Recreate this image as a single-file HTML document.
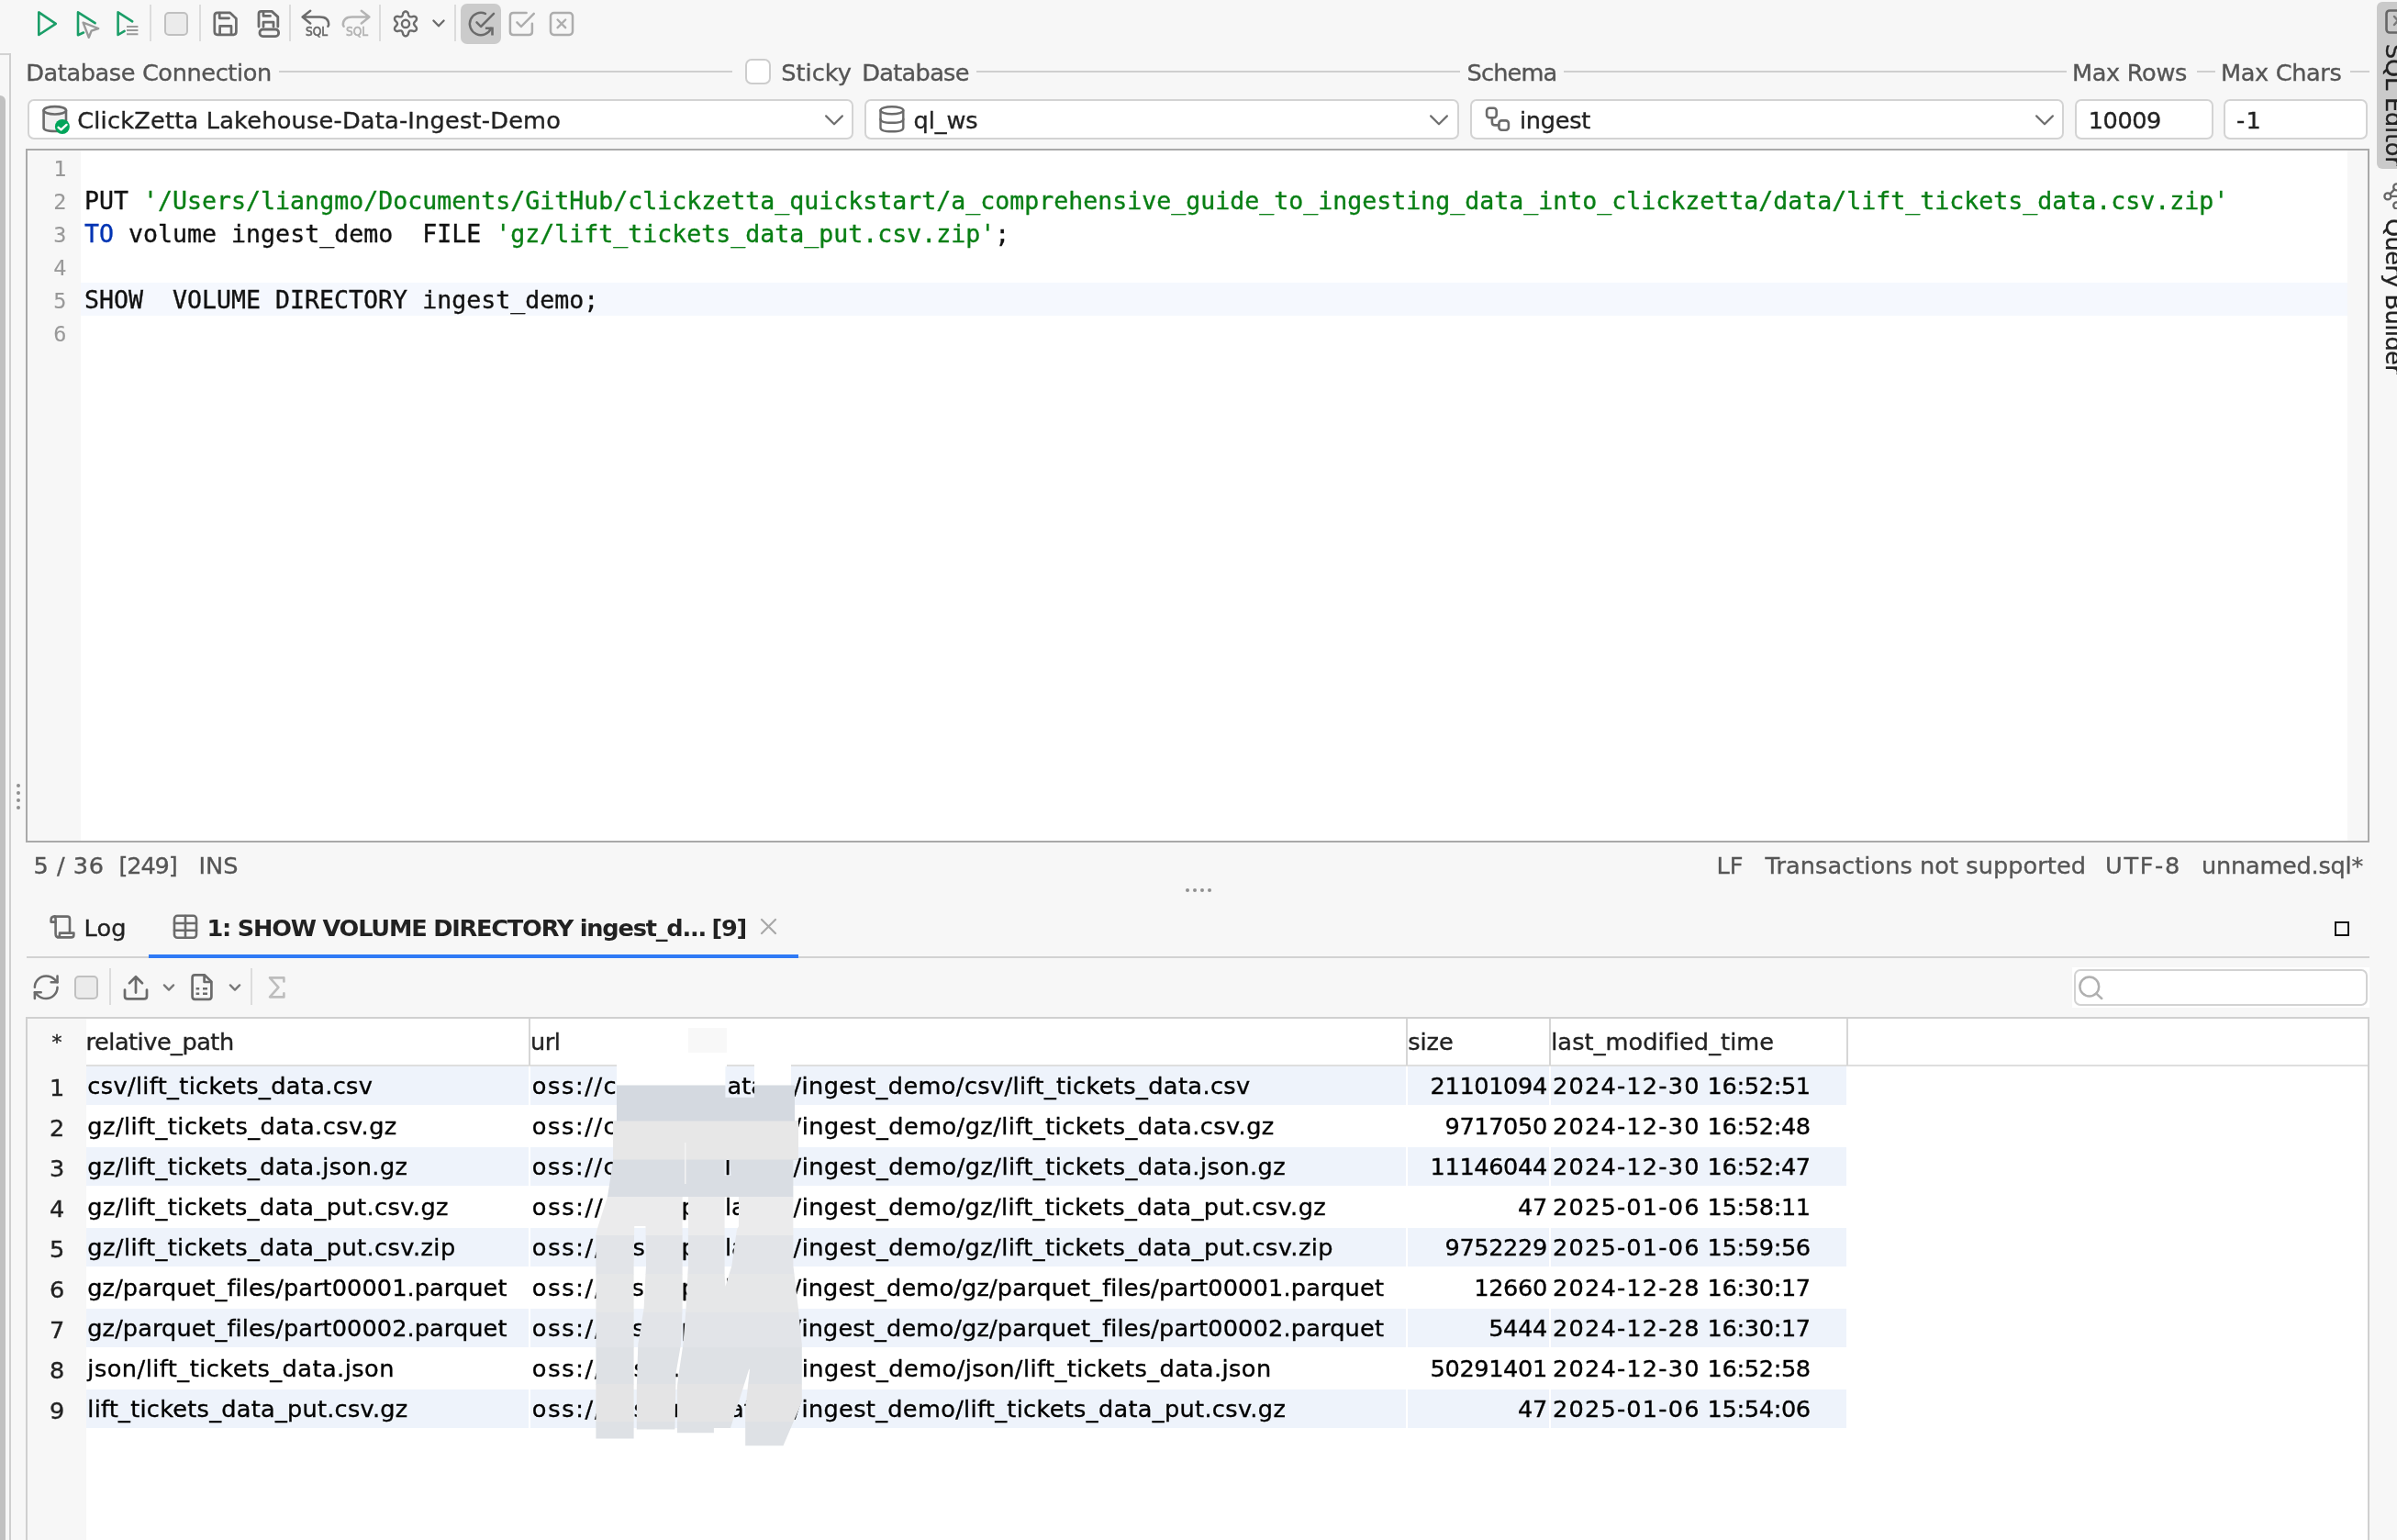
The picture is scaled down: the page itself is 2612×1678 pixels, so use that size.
<!DOCTYPE html>
<html lang="en"><head><meta charset="utf-8"><title>SQL Commander</title>
<style>
html,body{margin:0;padding:0;}
body{width:2612px;height:1678px;overflow:hidden;background:#f7f7f7;font-family:"DejaVu Sans","Liberation Sans",sans-serif;}
#root{will-change:transform;position:relative;width:2612px;height:1678px;overflow:hidden;background:#f7f7f7;}
.b{position:absolute;box-sizing:border-box;}
.t{position:absolute;white-space:pre;line-height:40px;height:40px;-webkit-text-stroke:0.35px;}
.m{font-family:"DejaVu Sans Mono","Liberation Mono",monospace;-webkit-text-stroke:0.35px;}
.sq{font-family:"DejaVu Sans Condensed","DejaVu Sans","Liberation Sans",sans-serif;font-weight:400;font-size:14.5px;letter-spacing:0px;-webkit-text-stroke:0.7px;transform:scaleX(0.93);transform-origin:0 50%;}

</style></head>
<body>
<div id="root">
<div class="b" style="left:0px;top:58px;width:12px;height:2px;background:#d2d2d2;"></div>
<div class="b" style="left:10px;top:58px;width:2px;height:1620px;background:#cfcfcf;"></div>
<div class="b" style="left:0px;top:104px;width:6px;height:1580px;background:#c1c1c1;border-top-right-radius:6px;"></div>
<div class="b" style="left:18px;top:854px;width:4px;height:4px;background:#8f8f8f;border-radius:50%;"></div>
<div class="b" style="left:18px;top:862px;width:4px;height:4px;background:#8f8f8f;border-radius:50%;"></div>
<div class="b" style="left:18px;top:870px;width:4px;height:4px;background:#8f8f8f;border-radius:50%;"></div>
<div class="b" style="left:18px;top:878px;width:4px;height:4px;background:#8f8f8f;border-radius:50%;"></div>
<div class="b" style="left:2590px;top:2px;width:40px;height:182px;background:#cacaca;border-radius:6px;"></div>
<svg class="b" style="left:2598.7px;top:10px" width="30" height="28" viewBox="0 0 30 28" fill="none" stroke-linecap="round" stroke-linejoin="round"><rect x="1.5" y="1.5" width="27" height="24" rx="3.5" stroke="#666" stroke-width="2.6"/><path d="M10 8 L18 17 M18 8 L10 17" stroke="#777" stroke-width="2.4"/></svg>
<div class="t" style="left:2599.5px;top:48px;font-size:25.6px;color:#222;transform-origin:0 0;transform:rotate(90deg) translate(0,-29px);letter-spacing:-0.2px;">SQL Editor</div>
<svg class="b" style="left:2594px;top:196px" width="30" height="32" viewBox="0 0 30 32" fill="none" stroke-linecap="round" stroke-linejoin="round"><circle cx="7.9" cy="17.9" r="3.5" stroke="#666" stroke-width="2.3"/><circle cx="17.7" cy="7.9" r="3.5" stroke="#666" stroke-width="2.3"/><circle cx="17.7" cy="27.9" r="3.5" stroke="#666" stroke-width="2.3"/><path d="M10.4 15.4 L15.2 10.4 M11.4 17.9 H22" stroke="#666" stroke-width="2.3"/></svg>
<div class="t" style="left:2599.5px;top:238px;font-size:25.6px;color:#222;transform-origin:0 0;transform:rotate(90deg) translate(0,-29px);letter-spacing:-0.55px;">Query Builder</div>
<svg class="b" style="left:37px;top:8px" width="32" height="36" viewBox="0 0 32 36" fill="none" stroke-linecap="round" stroke-linejoin="round"><path d="M5.3 5.4 L5.3 30 L23.8 17.8 Z" stroke="#1b9e68" stroke-width="2.6"/></svg>
<svg class="b" style="left:79px;top:8px" width="34" height="38" viewBox="0 0 34 38" fill="none" stroke-linecap="round" stroke-linejoin="round"><path d="M12 27.5 L6 30.2 L6 5.4 L24.6 17.2" stroke="#1b9e68" stroke-width="2.6"/><path d="M11.6 16.6 L28.2 23 L20.6 25.6 L17.8 32.8 Z" stroke="#9a9a9a" stroke-width="2.4"/></svg>
<svg class="b" style="left:123px;top:8px" width="34" height="36" viewBox="0 0 34 36" fill="none" stroke-linecap="round" stroke-linejoin="round"><path d="M12.6 25.8 L5.6 30 L5.6 5.4 L21.2 15.4" stroke="#1b9e68" stroke-width="2.6"/><path d="M15 21 H27.4 M15 25.1 H27.4 M15 29.2 H27.4" stroke="#9a9a9a" stroke-width="2" stroke-linecap="butt"/></svg>
<div class="b" style="left:163px;top:5px;width:2px;height:40px;background:#dcdcdc;"></div>
<div class="b" style="left:217px;top:5px;width:2px;height:40px;background:#dcdcdc;"></div>
<div class="b" style="left:315px;top:5px;width:2px;height:40px;background:#dcdcdc;"></div>
<div class="b" style="left:413px;top:5px;width:2px;height:40px;background:#dcdcdc;"></div>
<div class="b" style="left:495px;top:5px;width:2px;height:40px;background:#dcdcdc;"></div>
<div class="b" style="left:179px;top:13px;width:26px;height:26px;background:#ebebeb;border:2px solid #c0c0c0;border-radius:5px;"></div>
<svg class="b" style="left:230px;top:10px" width="32" height="32" viewBox="0 0 32 32" fill="none" stroke-linecap="round" stroke-linejoin="round"><path d="M7 3.8 H20.5 L27.4 10.2 V24.6 Q27.4 27.8 24.2 27.8 H7 Q3.8 27.8 3.8 24.6 V7 Q3.8 3.8 7 3.8 Z" stroke="#6b6b6b" stroke-width="2.7"/><path d="M9.2 4 V9.8 H19.6" stroke="#6b6b6b" stroke-width="2.7"/><path d="M9.6 27.6 V18.4 H22 V27.6" stroke="#6b6b6b" stroke-width="2.7"/></svg>
<svg class="b" style="left:278px;top:8px" width="30" height="36" viewBox="0 0 30 36" fill="none" stroke-linecap="round" stroke-linejoin="round"><path d="M4 21 V7 Q4 4.4 6.6 4.4 H18.2 L24.8 10.4 V21" stroke="#6b6b6b" stroke-width="2.8"/><path d="M9 4.6 V9.4 H16.5" stroke="#6b6b6b" stroke-width="2.8"/><path d="M9 21 V16.2 H20 V21" stroke="#6b6b6b" stroke-width="2.8"/><rect x="5" y="24" width="20.6" height="7.6" rx="3.4" stroke="#6b6b6b" stroke-width="2.8"/></svg>
<svg class="b" style="left:324px;top:6px" width="40" height="40" viewBox="0 0 40 40" fill="none" stroke-linecap="round" stroke-linejoin="round"><path d="M14.2 5.8 L5.6 12.6 L14.2 19.4 M6 12.6 H24.5 Q34.2 12.6 34.2 21 L33.4 22.8" stroke="#6b6b6b" stroke-width="2.5"/></svg>
<div class="t sq" style="left:333.2px;top:13.6px;color:#6b6b6b;">SQL</div>
<svg class="b" style="left:368px;top:6px" width="40" height="40" viewBox="0 0 40 40" fill="none" stroke-linecap="round" stroke-linejoin="round"><path d="M25.8 5.8 L34.4 12.6 L25.8 19.4 M34 12.6 H15.5 Q5.8 12.6 5.8 21 L6.6 22.8" stroke="#b4b4b4" stroke-width="2.5"/></svg>
<div class="t sq" style="left:377.2px;top:13.6px;color:#b4b4b4;">SQL</div>
<svg class="b" style="left:424px;top:8px" width="36" height="36" viewBox="0 0 36 36" fill="none" stroke-linecap="round" stroke-linejoin="round"><path d="M26.95 17.90 L26.98 18.21 L27.08 18.53 L27.23 18.87 L27.44 19.23 L27.71 19.61 L28.04 20.03 L28.47 20.51 L29.16 21.10 L29.54 21.65 L29.78 22.19 L29.93 22.72 L29.99 23.24 L29.96 23.73 L29.84 24.20 L29.65 24.62 L29.37 25.01 L29.03 25.34 L28.61 25.61 L28.14 25.82 L27.60 25.96 L27.02 26.02 L26.35 25.97 L25.49 25.66 L24.87 25.53 L24.34 25.45 L23.87 25.41 L23.46 25.41 L23.09 25.44 L22.76 25.52 L22.48 25.65 L22.22 25.84 L21.99 26.08 L21.77 26.38 L21.57 26.74 L21.37 27.17 L21.17 27.66 L20.97 28.27 L20.81 29.17 L20.52 29.77 L20.18 30.25 L19.79 30.64 L19.37 30.95 L18.93 31.17 L18.47 31.30 L18.00 31.35 L17.53 31.30 L17.07 31.17 L16.63 30.95 L16.21 30.64 L15.82 30.25 L15.48 29.77 L15.19 29.17 L15.03 28.27 L14.83 27.66 L14.63 27.17 L14.43 26.74 L14.23 26.38 L14.01 26.08 L13.78 25.84 L13.53 25.65 L13.24 25.52 L12.91 25.44 L12.54 25.41 L12.13 25.41 L11.66 25.45 L11.13 25.53 L10.51 25.66 L9.65 25.97 L8.98 26.02 L8.40 25.96 L7.86 25.82 L7.39 25.61 L6.97 25.34 L6.63 25.01 L6.35 24.62 L6.16 24.20 L6.04 23.73 L6.01 23.24 L6.07 22.72 L6.22 22.19 L6.46 21.65 L6.84 21.10 L7.53 20.51 L7.96 20.03 L8.29 19.61 L8.56 19.23 L8.77 18.87 L8.92 18.53 L9.02 18.21 L9.05 17.90 L9.02 17.59 L8.92 17.27 L8.77 16.93 L8.56 16.57 L8.29 16.19 L7.96 15.77 L7.53 15.29 L6.84 14.70 L6.46 14.15 L6.22 13.61 L6.07 13.08 L6.01 12.56 L6.04 12.07 L6.16 11.60 L6.35 11.17 L6.63 10.79 L6.97 10.46 L7.39 10.19 L7.86 9.98 L8.40 9.84 L8.98 9.78 L9.65 9.83 L10.51 10.14 L11.13 10.27 L11.66 10.35 L12.13 10.39 L12.54 10.39 L12.91 10.36 L13.24 10.28 L13.52 10.15 L13.78 9.96 L14.01 9.72 L14.23 9.42 L14.43 9.06 L14.63 8.63 L14.83 8.14 L15.03 7.53 L15.19 6.63 L15.48 6.03 L15.82 5.55 L16.21 5.16 L16.63 4.85 L17.07 4.63 L17.53 4.50 L18.00 4.45 L18.47 4.50 L18.93 4.63 L19.37 4.85 L19.79 5.16 L20.18 5.55 L20.52 6.03 L20.81 6.63 L20.97 7.53 L21.17 8.14 L21.37 8.63 L21.57 9.06 L21.77 9.42 L21.99 9.72 L22.22 9.96 L22.48 10.15 L22.76 10.28 L23.09 10.36 L23.46 10.39 L23.87 10.39 L24.34 10.35 L24.87 10.27 L25.49 10.14 L26.35 9.83 L27.02 9.78 L27.60 9.84 L28.14 9.98 L28.61 10.19 L29.03 10.46 L29.37 10.79 L29.65 11.17 L29.84 11.60 L29.96 12.07 L29.99 12.56 L29.93 13.08 L29.78 13.61 L29.54 14.15 L29.16 14.70 L28.47 15.29 L28.04 15.77 L27.71 16.19 L27.44 16.57 L27.23 16.93 L27.08 17.27 L26.98 17.59 Z" stroke="#6b6b6b" stroke-width="2.4" stroke-linejoin="round"/><circle cx="18" cy="17.9" r="4.1" stroke="#6b6b6b" stroke-width="2.4"/></svg>
<svg class="b" style="left:468px;top:16px" width="20" height="18" viewBox="0 0 20 18" fill="none" stroke-linecap="round" stroke-linejoin="round"><path d="M4.4 6.5 L10 12.3 L15.6 6.5" stroke="#6b6b6b" stroke-width="2.3"/></svg>
<div class="b" style="left:502px;top:4px;width:44px;height:44px;background:#cbcbcb;border-radius:7px;"></div>
<svg class="b" style="left:506px;top:8px" width="38" height="38" viewBox="0 0 38 38" fill="none" stroke-linecap="round" stroke-linejoin="round"><path d="M22.92 6.95 A12.1 12.1 0 1 0 29.05 22.92" stroke="#6b6b6b" stroke-width="2.5"/><path d="M13.5 16.3 L18 21 L32 6.8" stroke="#6b6b6b" stroke-width="2.5"/><path d="M22.9 22.8 H30.5 V30.4" stroke="#6b6b6b" stroke-width="2.6" stroke-linecap="butt" stroke-linejoin="miter"/></svg>
<svg class="b" style="left:552px;top:8px" width="34" height="36" viewBox="0 0 34 36" fill="none" stroke-linecap="round" stroke-linejoin="round"><path d="M21.6 5.9 H7.4 Q3.9 5.9 3.9 9.4 V26.4 Q3.9 29.9 7.4 29.9 H24.4 Q27.9 29.9 27.9 26.4 V17.8" stroke="#adadad" stroke-width="2.5"/><path d="M11.4 16.3 L15.9 21 L29.8 6.8" stroke="#adadad" stroke-width="2.5"/></svg>
<svg class="b" style="left:596px;top:8px" width="32" height="36" viewBox="0 0 32 36" fill="none" stroke-linecap="round" stroke-linejoin="round"><rect x="4" y="6" width="24" height="23.9" rx="3.6" stroke="#adadad" stroke-width="2.5"/><path d="M11.6 13.5 L20.2 22.2 M20.2 13.5 L11.6 22.2" stroke="#adadad" stroke-width="2.4"/></svg>
<div class="t" style="left:28.20px;top:58.80px;font-size:25.6px;color:#555;letter-spacing:-0.394px;">Database Connection</div>
<div class="b" style="left:304px;top:77px;width:494px;height:2px;background:#cfcfcf;"></div>
<div class="b" style="left:812px;top:64px;width:28px;height:28px;background:#fff;border:2px solid #cdcdcd;border-radius:7px;"></div>
<div class="t" style="left:851.30px;top:58.80px;font-size:25.6px;color:#555;letter-spacing:-0.005px;">Sticky</div>
<div class="t" style="left:939.30px;top:58.80px;font-size:25.6px;color:#555;letter-spacing:-0.703px;">Database</div>
<div class="b" style="left:1064px;top:77px;width:527px;height:2px;background:#cfcfcf;"></div>
<div class="t" style="left:1598.50px;top:58.80px;font-size:25.6px;color:#555;letter-spacing:-0.820px;">Schema</div>
<div class="b" style="left:1704px;top:77px;width:548px;height:2px;background:#cfcfcf;"></div>
<div class="t" style="left:2258.00px;top:58.80px;font-size:25.6px;color:#555;letter-spacing:-0.324px;">Max Rows</div>
<div class="b" style="left:2394px;top:77px;width:20px;height:2px;background:#cfcfcf;"></div>
<div class="t" style="left:2420.00px;top:58.80px;font-size:25.6px;color:#555;letter-spacing:-0.352px;">Max Chars</div>
<div class="b" style="left:2561px;top:77px;width:21px;height:2px;background:#cfcfcf;"></div>
<div class="b" style="left:30px;top:108px;width:900px;height:44px;background:#fff;border:2px solid #d3d3d3;border-radius:7px;"></div>
<div class="b" style="left:942px;top:108px;width:648px;height:44px;background:#fff;border:2px solid #d3d3d3;border-radius:7px;"></div>
<div class="b" style="left:1602px;top:108px;width:647px;height:44px;background:#fff;border:2px solid #d3d3d3;border-radius:7px;"></div>
<div class="b" style="left:2261px;top:108px;width:151px;height:44px;background:#fff;border:2px solid #d3d3d3;border-radius:7px;"></div>
<div class="b" style="left:2423px;top:108px;width:157px;height:44px;background:#fff;border:2px solid #d3d3d3;border-radius:7px;"></div>
<svg class="b" style="left:44px;top:112px" width="36" height="36" viewBox="0 0 36 36" fill="none" stroke-linecap="round" stroke-linejoin="round"><path d="M3.6 8.3 V27.3 Q3.6 31 15.8 31 Q28 31 28 27.3 V8.3" stroke="#6b6b6b" stroke-width="2.6" fill="#f0f0f0"/><ellipse cx="15.8" cy="8.3" rx="12.2" ry="4.2" stroke="#6b6b6b" stroke-width="2.6" fill="#f0f0f0"/><circle cx="23.9" cy="26" r="8" fill="#00a55a"/><path d="M19.6 26.8 L22.6 29.4 L28.5 23.9" stroke="#fff" stroke-width="2.4"/></svg>
<div class="t" style="left:84.20px;top:111.30px;font-size:25.6px;color:#222;letter-spacing:0.217px;">ClickZetta Lakehouse-Data-Ingest-Demo</div>
<svg class="b" style="left:897px;top:123px" width="24" height="18" viewBox="0 0 24 18" fill="none" stroke-linecap="round" stroke-linejoin="round"><path d="M3.1 3.4 L12 12.3 L20.9 3.4" stroke="#6e6e6e" stroke-width="2.2"/></svg>
<svg class="b" style="left:954px;top:113px" width="36" height="34" viewBox="0 0 36 34" fill="none" stroke-linecap="round" stroke-linejoin="round"><ellipse cx="17.9" cy="7.3" rx="12.4" ry="4" stroke="#6b6b6b" stroke-width="2.4"/><path d="M5.5 7.3 V26.2 Q5.5 30.3 17.9 30.3 Q30.3 30.3 30.3 26.2 V7.3" stroke="#6b6b6b" stroke-width="2.4"/><path d="M5.5 16.7 Q5.5 20.8 17.9 20.8 Q30.3 20.8 30.3 16.7" stroke="#6b6b6b" stroke-width="2.4"/></svg>
<div class="t" style="left:995.60px;top:111.30px;font-size:25.6px;color:#222;letter-spacing:-0.084px;">ql_ws</div>
<svg class="b" style="left:1556px;top:123px" width="24" height="18" viewBox="0 0 24 18" fill="none" stroke-linecap="round" stroke-linejoin="round"><path d="M3.1 3.4 L12 12.3 L20.9 3.4" stroke="#6e6e6e" stroke-width="2.2"/></svg>
<svg class="b" style="left:1614px;top:114px" width="36" height="34" viewBox="0 0 36 34" fill="none" stroke-linecap="round" stroke-linejoin="round"><rect x="6.1" y="3.7" width="10.6" height="10.6" rx="3" stroke="#6b6b6b" stroke-width="2.6"/><rect x="19.4" y="17.4" width="10.5" height="10.4" rx="3" stroke="#6b6b6b" stroke-width="2.6"/><path d="M11.9 14.4 V19.2 Q11.9 22.4 15.1 22.4 H19.2" stroke="#6b6b6b" stroke-width="2.6"/></svg>
<div class="t" style="left:1656.00px;top:111.30px;font-size:25.6px;color:#222;letter-spacing:-0.281px;">ingest</div>
<svg class="b" style="left:2216px;top:123px" width="24" height="18" viewBox="0 0 24 18" fill="none" stroke-linecap="round" stroke-linejoin="round"><path d="M3.1 3.4 L12 12.3 L20.9 3.4" stroke="#6e6e6e" stroke-width="2.2"/></svg>
<div class="t" style="left:2275.80px;top:111.30px;font-size:25.6px;color:#222;letter-spacing:-0.481px;">10009</div>
<div class="t" style="left:2437.00px;top:111.30px;font-size:25.6px;color:#222;letter-spacing:1.200px;">-1</div>
<div class="b" style="left:28px;top:162px;width:2554px;height:756px;background:#fff;border:2px solid #a9a9a9;"></div>
<div class="b" style="left:30px;top:164px;width:58px;height:752px;background:#f7f7f7;"></div>
<div class="b" style="left:2558px;top:164px;width:22px;height:752px;background:#f7f7f7;"></div>
<div class="b" style="left:88px;top:307.5px;width:2470px;height:36px;background:#f5f8fe;"></div>
<div class="t m" style="left:31px;width:41.5px;text-align:right;top:166px;line-height:36px;height:36px;font-size:23.5px;color:#999;-webkit-text-stroke:0.1px;">1</div>
<div class="t m" style="left:31px;width:41.5px;text-align:right;top:202px;line-height:36px;height:36px;font-size:23.5px;color:#999;-webkit-text-stroke:0.1px;">2</div>
<div class="t m" style="left:31px;width:41.5px;text-align:right;top:238px;line-height:36px;height:36px;font-size:23.5px;color:#999;-webkit-text-stroke:0.1px;">3</div>
<div class="t m" style="left:31px;width:41.5px;text-align:right;top:274px;line-height:36px;height:36px;font-size:23.5px;color:#999;-webkit-text-stroke:0.1px;">4</div>
<div class="t m" style="left:31px;width:41.5px;text-align:right;top:310px;line-height:36px;height:36px;font-size:23.5px;color:#999;-webkit-text-stroke:0.1px;">5</div>
<div class="t m" style="left:31px;width:41.5px;text-align:right;top:346px;line-height:36px;height:36px;font-size:23.5px;color:#999;-webkit-text-stroke:0.1px;">6</div>
<div class="t m" style="left:92.1px;top:200.5px;line-height:36px;height:36px;font-size:26.58px;"><span style="color:#111">PUT </span><span style="color:#087f14">&#x27;/Users/liangmo/Documents/GitHub/clickzetta_quickstart/a_comprehensive_guide_to_ingesting_data_into_clickzetta/data/lift_tickets_data.csv.zip&#x27;</span></div>
<div class="t m" style="left:92.1px;top:236.5px;line-height:36px;height:36px;font-size:26.58px;"><span style="color:#0033b3">TO</span><span style="color:#111"> volume ingest_demo  FILE </span><span style="color:#087f14">&#x27;gz/lift_tickets_data_put.csv.zip&#x27;</span><span style="color:#111">;</span></div>
<div class="t m" style="left:92.1px;top:308.5px;line-height:36px;height:36px;font-size:26.58px;"><span style="color:#111">SHOW  VOLUME DIRECTORY ingest_demo;</span></div>
<div class="t" style="left:36.50px;top:923.00px;font-size:25.6px;color:#555;letter-spacing:0.542px;">5 / 36</div>
<div class="t" style="left:129.50px;top:923.00px;font-size:25.6px;color:#555;letter-spacing:-1.163px;">[249]</div>
<div class="t" style="left:216.50px;top:923.00px;font-size:25.6px;color:#555;letter-spacing:0.021px;">INS</div>
<div class="t" style="left:1870.50px;top:923.00px;font-size:25.6px;color:#555;letter-spacing:0.008px;">LF</div>
<div class="t" style="left:1923.50px;top:923.00px;font-size:25.6px;color:#555;letter-spacing:0.051px;">Transactions not supported</div>
<div class="t" style="left:2294.00px;top:923.00px;font-size:25.6px;color:#555;letter-spacing:1.678px;">UTF-8</div>
<div class="t" style="left:2399.00px;top:923.00px;font-size:25.6px;color:#555;letter-spacing:-0.242px;">unnamed.sql*</div>
<div class="b" style="left:1292px;top:968px;width:4px;height:4px;background:#909090;border-radius:50%;"></div>
<div class="b" style="left:1300px;top:968px;width:4px;height:4px;background:#909090;border-radius:50%;"></div>
<div class="b" style="left:1308px;top:968px;width:4px;height:4px;background:#909090;border-radius:50%;"></div>
<div class="b" style="left:1316px;top:968px;width:4px;height:4px;background:#909090;border-radius:50%;"></div>
<div class="b" style="left:29px;top:1042px;width:2553px;height:2px;background:#d2d2d2;"></div>
<div class="b" style="left:162px;top:1040px;width:708px;height:4px;background:#2f7af5;"></div>
<svg class="b" style="left:50px;top:994px" width="36" height="32" viewBox="0 0 36 32" fill="none" stroke-linecap="round" stroke-linejoin="round"><path d="M9.6 4.6 H23.4 Q26 4.6 26 7.2 V22.4" stroke="#6b6b6b" stroke-width="2.6"/><path d="M9.6 4.6 Q5.6 4.6 5.6 8.2 V10.6 H10.6 V23.4 Q10.6 27.4 14.4 27.4 H27.6 Q30.4 27.4 30.4 24.8 V22.6 H15 V24.2 Q15 27.4 12.6 27.4" stroke="#6b6b6b" stroke-width="2.6"/><path d="M9.6 4.6 Q10.6 4.8 10.6 8.6 V11" stroke="#6b6b6b" stroke-width="2.6"/></svg>
<div class="t" style="left:91.60px;top:990.50px;font-size:25.6px;color:#222;letter-spacing:0.094px;">Log</div>
<svg class="b" style="left:186px;top:994px" width="32" height="32" viewBox="0 0 32 32" fill="none" stroke-linecap="round" stroke-linejoin="round"><rect x="4" y="3.8" width="24" height="24" rx="3.4" stroke="#6b6b6b" stroke-width="2.6"/><path d="M4 12 H28 M4 19.8 H28 M16 4 V27.6" stroke="#6b6b6b" stroke-width="2.6"/></svg>
<div class="t" style="left:225.40px;top:990.50px;font-size:25.6px;color:#222;letter-spacing:-1.207px;font-weight:700;-webkit-text-stroke:0;">1: SHOW VOLUME DIRECTORY ingest_d...</div>
<div class="t" style="left:775.60px;top:990.50px;font-size:25.6px;color:#222;letter-spacing:-1.240px;font-weight:700;-webkit-text-stroke:0;">[9]</div>
<svg class="b" style="left:826px;top:998px" width="24" height="24" viewBox="0 0 24 24" fill="none" stroke-linecap="round" stroke-linejoin="round"><path d="M4 4 L19 19 M19 4 L4 19" stroke="#a8a8a8" stroke-width="2.2"/></svg>
<div class="b" style="left:2544px;top:1004px;width:16px;height:16px;border:2px solid #111;"></div>
<svg class="b" style="left:30px;top:1055px" width="42" height="42" viewBox="0 0 42 42" fill="none" stroke="#6b6b6b" stroke-width="1.85" stroke-linecap="round" stroke-linejoin="round"><g transform="translate(3.76,4.3) scale(1.37)"><path d="M3 12a9 9 0 0 1 9-9 9.75 9.75 0 0 1 6.74 2.74L21 8"/><path d="M21 3v5h-5"/><path d="M21 12a9 9 0 0 1-9 9 9.75 9.75 0 0 1-6.74-2.74L3 16"/><path d="M8 16H3v5"/></g></svg>
<div class="b" style="left:81px;top:1063px;width:26px;height:26px;background:#ebebeb;border:2px solid #c0c0c0;border-radius:5px;"></div>
<div class="b" style="left:119px;top:1055px;width:2px;height:40px;background:#dcdcdc;"></div>
<svg class="b" style="left:131px;top:1059.6px" width="34" height="34" viewBox="0 0 34 34" fill="none" stroke-linecap="round" stroke-linejoin="round"><path d="M5 18.6 V25.4 Q5 28.4 8 28.4 H26 Q29 28.4 29 25.4 V18.6" stroke="#6b6b6b" stroke-width="2.7"/><path d="M17 21.6 V4.6 M10 11.2 L17 4.2 L24 11.2" stroke="#6b6b6b" stroke-width="2.7"/></svg>
<svg class="b" style="left:174px;top:1068px" width="20" height="18" viewBox="0 0 20 18" fill="none" stroke-linecap="round" stroke-linejoin="round"><path d="M4.9 5.4 L10 10.6 L15.1 5.4" stroke="#777" stroke-width="2.3"/></svg>
<svg class="b" style="left:204px;top:1058px" width="32" height="36" viewBox="0 0 32 36" fill="none" stroke-linecap="round" stroke-linejoin="round"><path d="M8.4 4.4 H19 L26.4 11.6 V28 Q26.4 30.8 23.6 30.8 H8.4 Q5.6 30.8 5.6 28 V7.2 Q5.6 4.4 8.4 4.4 Z" stroke="#6b6b6b" stroke-width="2.7"/><path d="M18.6 4.8 V12 H26" stroke="#6b6b6b" stroke-width="2.7"/><path d="M9.6 19.3 H13.2 M17 19.3 H22 M9.6 24.8 H13.2 M17 24.8 H22" stroke="#6b6b6b" stroke-width="2.4" stroke-linecap="butt"/></svg>
<svg class="b" style="left:246px;top:1068px" width="20" height="18" viewBox="0 0 20 18" fill="none" stroke-linecap="round" stroke-linejoin="round"><path d="M4.9 5.4 L10 10.6 L15.1 5.4" stroke="#777" stroke-width="2.3"/></svg>
<div class="b" style="left:273px;top:1055px;width:2px;height:40px;background:#dcdcdc;"></div>
<svg class="b" style="left:288px;top:1060px" width="28" height="32" viewBox="0 0 28 32" fill="none" stroke-linecap="round" stroke-linejoin="round"><path d="M21.4 9.4 V5.4 H6 L15.4 15.8 L6 26.4 H21.4 V22.4" stroke="#bdbdbd" stroke-width="2.6"/></svg>
<div class="b" style="left:2258px;top:1054px;width:324px;height:44px;background:#fff;"></div>
<div class="b" style="left:2260px;top:1056px;width:320px;height:40px;background:#fff;border:2px solid #d2d2d2;border-radius:7px;"></div>
<svg class="b" style="left:2264px;top:1061px" width="30" height="30" viewBox="0 0 30 30" fill="none" stroke-linecap="round" stroke-linejoin="round"><circle cx="12.8" cy="14" r="10.4" stroke="#b0b0b0" stroke-width="2.5"/><path d="M20.4 21.6 L26.2 27" stroke="#b0b0b0" stroke-width="2.5"/></svg>
<div class="b" style="left:28px;top:1108px;width:2554px;height:600px;background:#fff;border:2px solid #d0d0d0;"></div>
<div class="b" style="left:30px;top:1110px;width:64px;height:580px;background:#f7f7f7;"></div>
<div class="b" style="left:94px;top:1160px;width:2486px;height:2px;background:#dedede;"></div>
<div class="b" style="left:576px;top:1110px;width:2px;height:51px;background:#d6d6d6;"></div>
<div class="b" style="left:1532px;top:1110px;width:2px;height:51px;background:#d6d6d6;"></div>
<div class="b" style="left:1688px;top:1110px;width:2px;height:51px;background:#d6d6d6;"></div>
<div class="b" style="left:2012px;top:1110px;width:2px;height:51px;background:#d6d6d6;"></div>
<div class="t" style="left:56.40px;top:1116.00px;font-size:22px;color:#222;">*</div>
<div class="t" style="left:93.60px;top:1115.00px;font-size:25.6px;color:#222;letter-spacing:-0.501px;">relative_path</div>
<div class="t" style="left:578.00px;top:1115.00px;font-size:25.6px;color:#222;letter-spacing:-0.448px;">url</div>
<div class="t" style="left:1534.20px;top:1115.00px;font-size:25.6px;color:#222;letter-spacing:-0.031px;">size</div>
<div class="t" style="left:1690.20px;top:1115.00px;font-size:25.6px;color:#222;letter-spacing:0.075px;">last_modified_time</div>
<div class="b" style="left:94px;top:1162px;width:482px;height:42px;background:#eef3fb;"></div>
<div class="b" style="left:578px;top:1162px;width:954px;height:42px;background:#eef3fb;"></div>
<div class="b" style="left:1534px;top:1162px;width:154px;height:42px;background:#eef3fb;"></div>
<div class="b" style="left:1690px;top:1162px;width:322px;height:42px;background:#eef3fb;"></div>
<div class="t" style="left:54.00px;top:1165.00px;font-size:25.6px;color:#222;">1</div>
<div class="t" style="left:95.30px;top:1163.00px;font-size:25.6px;color:#000;letter-spacing:0.353px;">csv/lift_tickets_data.csv</div>
<div class="t" style="left:579.80px;top:1163.00px;font-size:25.6px;color:#000;letter-spacing:1.605px;">oss://c</div>
<div class="t" style="left:864.60px;top:1163.00px;font-size:25.6px;color:#000;letter-spacing:0.382px;">/ingest_demo/csv/lift_tickets_data.csv</div>
<div class="t" style="left:1558.60px;top:1163.00px;font-size:25.6px;color:#000;letter-spacing:-0.381px;">21101094</div>
<div class="t" style="left:1692.10px;top:1163.00px;font-size:25.6px;color:#000;letter-spacing:1.178px;">2024-12-30</div>
<div class="t" style="left:1860.60px;top:1163.00px;font-size:25.6px;color:#000;letter-spacing:-0.342px;">16:52:51</div>
<div class="t" style="left:54.00px;top:1209.00px;font-size:25.6px;color:#222;">2</div>
<div class="t" style="left:95.30px;top:1207.00px;font-size:25.6px;color:#000;letter-spacing:0.457px;">gz/lift_tickets_data.csv.gz</div>
<div class="t" style="left:579.80px;top:1207.00px;font-size:25.6px;color:#000;letter-spacing:1.605px;">oss://c</div>
<div class="t" style="left:864.60px;top:1207.00px;font-size:25.6px;color:#000;letter-spacing:0.443px;">/ingest_demo/gz/lift_tickets_data.csv.gz</div>
<div class="t" style="left:1574.50px;top:1207.00px;font-size:25.6px;color:#000;letter-spacing:-0.381px;">9717050</div>
<div class="t" style="left:1692.10px;top:1207.00px;font-size:25.6px;color:#000;letter-spacing:1.178px;">2024-12-30</div>
<div class="t" style="left:1860.60px;top:1207.00px;font-size:25.6px;color:#000;letter-spacing:-0.342px;">16:52:48</div>
<div class="b" style="left:94px;top:1250px;width:482px;height:42px;background:#eef3fb;"></div>
<div class="b" style="left:578px;top:1250px;width:954px;height:42px;background:#eef3fb;"></div>
<div class="b" style="left:1534px;top:1250px;width:154px;height:42px;background:#eef3fb;"></div>
<div class="b" style="left:1690px;top:1250px;width:322px;height:42px;background:#eef3fb;"></div>
<div class="t" style="left:54.00px;top:1253.00px;font-size:25.6px;color:#222;">3</div>
<div class="t" style="left:95.30px;top:1251.00px;font-size:25.6px;color:#000;letter-spacing:0.439px;">gz/lift_tickets_data.json.gz</div>
<div class="t" style="left:579.80px;top:1251.00px;font-size:25.6px;color:#000;letter-spacing:1.605px;">oss://c</div>
<div class="t" style="left:864.60px;top:1251.00px;font-size:25.6px;color:#000;letter-spacing:0.448px;">/ingest_demo/gz/lift_tickets_data.json.gz</div>
<div class="t" style="left:1558.60px;top:1251.00px;font-size:25.6px;color:#000;letter-spacing:-0.381px;">11146044</div>
<div class="t" style="left:1692.10px;top:1251.00px;font-size:25.6px;color:#000;letter-spacing:1.178px;">2024-12-30</div>
<div class="t" style="left:1860.60px;top:1251.00px;font-size:25.6px;color:#000;letter-spacing:-0.342px;">16:52:47</div>
<div class="t" style="left:54.00px;top:1297.00px;font-size:25.6px;color:#222;">4</div>
<div class="t" style="left:95.30px;top:1295.00px;font-size:25.6px;color:#000;letter-spacing:0.427px;">gz/lift_tickets_data_put.csv.gz</div>
<div class="t" style="left:579.80px;top:1295.00px;font-size:25.6px;color:#000;letter-spacing:1.719px;">oss://</div>
<div class="t" style="left:864.60px;top:1295.00px;font-size:25.6px;color:#000;letter-spacing:0.428px;">/ingest_demo/gz/lift_tickets_data_put.csv.gz</div>
<div class="t" style="left:1654.00px;top:1295.00px;font-size:25.6px;color:#000;letter-spacing:-0.381px;">47</div>
<div class="t" style="left:1692.10px;top:1295.00px;font-size:25.6px;color:#000;letter-spacing:1.178px;">2025-01-06</div>
<div class="t" style="left:1860.60px;top:1295.00px;font-size:25.6px;color:#000;letter-spacing:-0.342px;">15:58:11</div>
<div class="b" style="left:94px;top:1338px;width:482px;height:42px;background:#eef3fb;"></div>
<div class="b" style="left:578px;top:1338px;width:954px;height:42px;background:#eef3fb;"></div>
<div class="b" style="left:1534px;top:1338px;width:154px;height:42px;background:#eef3fb;"></div>
<div class="b" style="left:1690px;top:1338px;width:322px;height:42px;background:#eef3fb;"></div>
<div class="t" style="left:54.00px;top:1341.00px;font-size:25.6px;color:#222;">5</div>
<div class="t" style="left:95.30px;top:1339.00px;font-size:25.6px;color:#000;letter-spacing:0.429px;">gz/lift_tickets_data_put.csv.zip</div>
<div class="t" style="left:579.80px;top:1339.00px;font-size:25.6px;color:#000;letter-spacing:1.719px;">oss://</div>
<div class="t" style="left:864.60px;top:1339.00px;font-size:25.6px;color:#000;letter-spacing:0.434px;">/ingest_demo/gz/lift_tickets_data_put.csv.zip</div>
<div class="t" style="left:1574.50px;top:1339.00px;font-size:25.6px;color:#000;letter-spacing:-0.381px;">9752229</div>
<div class="t" style="left:1692.10px;top:1339.00px;font-size:25.6px;color:#000;letter-spacing:1.178px;">2025-01-06</div>
<div class="t" style="left:1860.60px;top:1339.00px;font-size:25.6px;color:#000;letter-spacing:-0.342px;">15:59:56</div>
<div class="t" style="left:54.00px;top:1385.00px;font-size:25.6px;color:#222;">6</div>
<div class="t" style="left:95.30px;top:1383.00px;font-size:25.6px;color:#000;letter-spacing:0.077px;">gz/parquet_files/part00001.parquet</div>
<div class="t" style="left:579.80px;top:1383.00px;font-size:25.6px;color:#000;letter-spacing:1.719px;">oss://</div>
<div class="t" style="left:864.60px;top:1383.00px;font-size:25.6px;color:#000;letter-spacing:0.162px;">/ingest_demo/gz/parquet_files/part00001.parquet</div>
<div class="t" style="left:1606.30px;top:1383.00px;font-size:25.6px;color:#000;letter-spacing:-0.381px;">12660</div>
<div class="t" style="left:1692.10px;top:1383.00px;font-size:25.6px;color:#000;letter-spacing:1.178px;">2024-12-28</div>
<div class="t" style="left:1860.60px;top:1383.00px;font-size:25.6px;color:#000;letter-spacing:-0.342px;">16:30:17</div>
<div class="b" style="left:94px;top:1426px;width:482px;height:42px;background:#eef3fb;"></div>
<div class="b" style="left:578px;top:1426px;width:954px;height:42px;background:#eef3fb;"></div>
<div class="b" style="left:1534px;top:1426px;width:154px;height:42px;background:#eef3fb;"></div>
<div class="b" style="left:1690px;top:1426px;width:322px;height:42px;background:#eef3fb;"></div>
<div class="t" style="left:54.00px;top:1429.00px;font-size:25.6px;color:#222;">7</div>
<div class="t" style="left:95.30px;top:1427.00px;font-size:25.6px;color:#000;letter-spacing:0.077px;">gz/parquet_files/part00002.parquet</div>
<div class="t" style="left:579.80px;top:1427.00px;font-size:25.6px;color:#000;letter-spacing:1.719px;">oss://</div>
<div class="t" style="left:864.60px;top:1427.00px;font-size:25.6px;color:#000;letter-spacing:0.162px;">/ingest_demo/gz/parquet_files/part00002.parquet</div>
<div class="t" style="left:1622.20px;top:1427.00px;font-size:25.6px;color:#000;letter-spacing:-0.381px;">5444</div>
<div class="t" style="left:1692.10px;top:1427.00px;font-size:25.6px;color:#000;letter-spacing:1.178px;">2024-12-28</div>
<div class="t" style="left:1860.60px;top:1427.00px;font-size:25.6px;color:#000;letter-spacing:-0.342px;">16:30:17</div>
<div class="t" style="left:54.00px;top:1473.00px;font-size:25.6px;color:#222;">8</div>
<div class="t" style="left:95.30px;top:1471.00px;font-size:25.6px;color:#000;letter-spacing:0.478px;">json/lift_tickets_data.json</div>
<div class="t" style="left:579.80px;top:1471.00px;font-size:25.6px;color:#000;letter-spacing:1.719px;">oss://</div>
<div class="t" style="left:864.60px;top:1471.00px;font-size:25.6px;color:#000;letter-spacing:0.449px;">/ingest_demo/json/lift_tickets_data.json</div>
<div class="t" style="left:1558.60px;top:1471.00px;font-size:25.6px;color:#000;letter-spacing:-0.381px;">50291401</div>
<div class="t" style="left:1692.10px;top:1471.00px;font-size:25.6px;color:#000;letter-spacing:1.178px;">2024-12-30</div>
<div class="t" style="left:1860.60px;top:1471.00px;font-size:25.6px;color:#000;letter-spacing:-0.342px;">16:52:58</div>
<div class="b" style="left:94px;top:1514px;width:482px;height:42px;background:#eef3fb;"></div>
<div class="b" style="left:578px;top:1514px;width:954px;height:42px;background:#eef3fb;"></div>
<div class="b" style="left:1534px;top:1514px;width:154px;height:42px;background:#eef3fb;"></div>
<div class="b" style="left:1690px;top:1514px;width:322px;height:42px;background:#eef3fb;"></div>
<div class="t" style="left:54.00px;top:1517.00px;font-size:25.6px;color:#222;">9</div>
<div class="t" style="left:95.30px;top:1515.00px;font-size:25.6px;color:#000;letter-spacing:0.252px;">lift_tickets_data_put.csv.gz</div>
<div class="t" style="left:579.80px;top:1515.00px;font-size:25.6px;color:#000;letter-spacing:1.719px;">oss://</div>
<div class="t" style="left:864.60px;top:1515.00px;font-size:25.6px;color:#000;letter-spacing:0.320px;">/ingest_demo/lift_tickets_data_put.csv.gz</div>
<div class="t" style="left:1654.00px;top:1515.00px;font-size:25.6px;color:#000;letter-spacing:-0.381px;">47</div>
<div class="t" style="left:1692.10px;top:1515.00px;font-size:25.6px;color:#000;letter-spacing:1.178px;">2025-01-06</div>
<div class="t" style="left:1860.60px;top:1515.00px;font-size:25.6px;color:#000;letter-spacing:-0.342px;">15:54:06</div>
<div class="t" style="left:792.50px;top:1163.00px;font-size:25.6px;color:#000;">ata</div>
<div class="t" style="left:789.50px;top:1251.00px;font-size:25.6px;color:#000;">l</div>
<div class="t" style="left:742.60px;top:1295.00px;font-size:25.6px;color:#000;">p</div>
<div class="t" style="left:790.00px;top:1295.00px;font-size:25.6px;color:#000;">la</div>
<div class="t" style="left:689.50px;top:1339.00px;font-size:25.6px;color:#000;">s.</div>
<div class="t" style="left:742.60px;top:1339.00px;font-size:25.6px;color:#000;">p</div>
<div class="t" style="left:790.00px;top:1339.00px;font-size:25.6px;color:#000;">la</div>
<div class="t" style="left:688.50px;top:1383.00px;font-size:25.6px;color:#000;">s.</div>
<div class="t" style="left:742.60px;top:1383.00px;font-size:25.6px;color:#000;">p</div>
<div class="t" style="left:790.00px;top:1383.00px;font-size:25.6px;color:#000;">l</div>
<div class="t" style="left:689.00px;top:1427.00px;font-size:25.6px;color:#000;">s</div>
<div class="t" style="left:742.60px;top:1427.00px;font-size:25.6px;color:#000;">p</div>
<div class="t" style="left:690.50px;top:1471.00px;font-size:25.6px;color:#000;">s</div>
<div class="t" style="left:733.00px;top:1471.00px;font-size:25.6px;color:#000;">.</div>
<div class="t" style="left:690.50px;top:1515.00px;font-size:25.6px;color:#000;">s</div>
<div class="t" style="left:733.50px;top:1515.00px;font-size:25.6px;color:#000;">n</div>
<div class="t" style="left:795.00px;top:1515.00px;font-size:25.6px;color:#000;">at</div>
<div class="t" style="left:858.00px;top:1515.00px;font-size:25.6px;color:#000;">.</div>
<svg class="b" style="left:640px;top:1110px" width="240" height="470" viewBox="0 0 240 470" stroke="none"><defs><clipPath id="blob"><polygon points="32.0,72.5 150.4,72.5 150.4,112.0 32.0,112.0" /><polygon points="150.4,85.7 182.0,85.7 182.0,112.0 150.4,112.0" /><polygon points="182.0,72.5 226.0,72.5 226.0,112.0 182.0,112.0" /><polygon points="28.0,111.4 230.0,111.4 230.0,154.0 28.0,154.0" /><polygon points="28.0,153.5 149.6,153.5 149.6,194.0 22.0,194.0 28.0,155.0" /><polygon points="149.6,171.0 156.5,171.0 165.0,194.0 149.6,194.0" /><polygon points="155.0,153.5 224.4,153.5 224.4,194.0 165.0,194.0 156.5,171.0" /><polygon points="22.0,194.0 103.6,194.0 103.6,226.0 11.7,226.0" /><polygon points="11.7,226.0 51.2,226.0 50.6,270.0 50.6,457.5 9.4,457.5 9.4,235.0" /><polygon points="63.5,226.0 103.6,226.0 103.6,315.7 102.0,354.7 96.6,386.0 95.4,447.4 53.8,447.4 53.8,401.0 55.3,354.7 61.6,315.7 64.0,269.0" /><polygon points="109.9,194.0 149.6,194.0 149.6,280.0 150.4,292.0 176.5,381.0 156.0,446.0 137.9,446.0 137.9,451.3 97.9,451.3 97.9,401.0 99.7,386.0 104.4,354.7 107.5,315.7 109.9,269.0" /><polygon points="165.0,194.0 224.4,194.0 224.4,269.0 229.9,315.7 233.8,354.7 233.8,417.0 230.7,425.0 213.5,465.3 172.2,465.3 172.2,425.0 176.9,383.0 150.4,292.0 157.4,269.0 162.9,230.0 165.0,226.0" /></clipPath></defs><polygon points="110.0,10.0 152.0,10.0 152.0,37.0 110.0,37.0" fill="#f8f8f8"/><polygon points="110.0,37.0 152.0,37.0 152.0,52.0 110.0,52.0" fill="#fff"/><polygon points="32.0,50.0 150.4,50.0 150.4,73.0 32.0,73.0" fill="#fff"/><polygon points="182.0,50.0 222.0,50.0 222.0,73.0 182.0,73.0" fill="#fff"/><g clip-path="url(#blob)"><polygon points="0.0,72.0 240.0,72.0 240.0,111.9 0.0,111.9" fill="#d4d9e0"/><polygon points="0.0,111.4 240.0,111.4 240.0,154.0 0.0,154.0" fill="#e7e7e7"/><polygon points="0.0,153.5 240.0,153.5 240.0,194.5 0.0,194.5" fill="#d9dde3"/><polygon points="0.0,194.0 240.0,194.0 240.0,236.5 0.0,236.5" fill="#ebebec"/><polygon points="0.0,236.0 240.0,236.0 240.0,278.5 0.0,278.5" fill="#e2e4e8"/><polygon points="0.0,278.0 240.0,278.0 240.0,320.5 0.0,320.5" fill="#e6e7e8"/><polygon points="0.0,320.0 240.0,320.0 240.0,358.5 0.0,358.5" fill="#e2e4e8"/><polygon points="0.0,358.0 240.0,358.0 240.0,398.5 0.0,398.5" fill="#dee1e5"/><polygon points="0.0,398.0 240.0,398.0 240.0,439.5 0.0,439.5" fill="#e4e4e5"/><polygon points="0.0,439.0 240.0,439.0 240.0,470.5 0.0,470.5" fill="#dee1e5"/><polygon points="106.0,135.0 107.5,135.0 107.5,180.0 106.0,180.0" fill="#f4f4f4"/></g></svg>
</div>
</body></html>
